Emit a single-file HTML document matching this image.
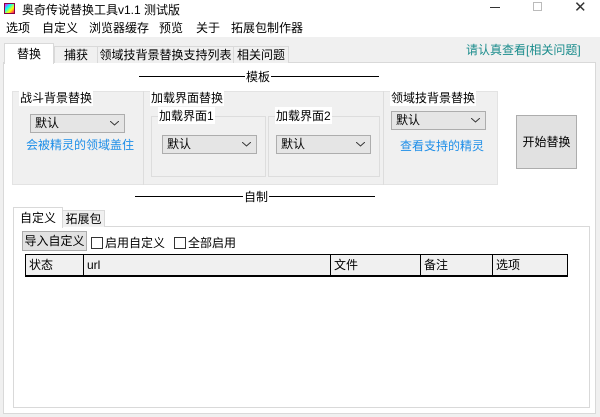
<!DOCTYPE html><html><head><meta charset="utf-8"><style>
*{margin:0;padding:0;box-sizing:border-box}
body{width:600px;height:417px;overflow:hidden;background:#f0f0f0;position:relative;font-family:"Liberation Sans","Noto Sans CJK SC",sans-serif;font-size:12px;color:#000}
.a{position:absolute;white-space:nowrap}
.combo{position:absolute;height:19px;background:#e5e5e5;border:1px solid #adadad;padding-left:4px;line-height:17px;font-size:12px}
.combo svg{position:absolute;right:5px;top:6px}
.tab{position:absolute;border:1px solid #d9d9d9;border-bottom:none;background:#f0f0f0;text-align:center;line-height:17px;font-size:12px}
.th{position:absolute;top:0;height:22px;border-right:1px solid #000;padding-left:3px;line-height:21px}
.chk{display:inline-block;width:12px;height:12px;border:1px solid #333;background:#fff;vertical-align:-2px;margin-right:2px}
</style></head><body>
<div class="a" style="left:0;top:0;width:600px;height:37px;background:#fff"></div>
<div class="a" style="left:4px;top:3px;width:11px;height:11px;background:linear-gradient(135deg,#f0f,#0ff,#ff0,#f06);border:1px solid #804"></div>
<div class="a" style="left:22px;top:1px;font-size:12px">奥奇传说替换工具v1.1 测试版</div>
<div class="a" style="left:490px;top:7px;width:10px;height:1px;background:#333"></div>
<div class="a" style="left:533px;top:2px;width:9px;height:9px;border:1px solid #bbb"></div>
<div class="a" style="left:574px;top:-2px;font-size:15px;color:#333">✕</div>
<div class="a" style="left:6px;top:19px">选项</div>
<div class="a" style="left:42px;top:19px">自定义</div>
<div class="a" style="left:89px;top:19px">浏览器缓存</div>
<div class="a" style="left:159px;top:19px">预览</div>
<div class="a" style="left:196px;top:19px">关于</div>
<div class="a" style="left:231px;top:19px">拓展包制作器</div>
<div class="a" style="left:3px;top:62px;width:593px;height:352px;background:#fff;border:1px solid #d9d9d9"></div>
<div class="tab" style="left:54px;top:46px;width:44px;height:17px">捕获</div>
<div class="tab" style="left:97px;top:46px;width:137px;height:17px">领域技背景替换支持列表</div>
<div class="tab" style="left:233px;top:46px;width:56px;height:17px">相关问题</div>
<div class="tab" style="left:4px;top:43px;width:50px;height:21px;background:#fff;line-height:20px">替换</div>
<div class="a" style="left:466px;top:41px;color:#1a8c8c;font-size:12px">请认真查看[相关问题]</div>
<div class="a" style="left:139px;top:76px;width:240px;height:1px;background:#000"></div>
<div class="a" style="left:245px;top:68px;background:#fff;padding:0 1px">模板</div>
<div class="a" style="left:12px;top:91px;width:486px;height:94px;background:#f0f0f0;border:1px solid #e3e3e3"></div>
<div class="a" style="left:143px;top:91px;width:1px;height:94px;background:#ddd"></div>
<div class="a" style="left:383px;top:91px;width:1px;height:94px;background:#ddd"></div>
<div class="a" style="left:19px;top:89px;background:#fff;padding:0 1px">战斗背景替换</div>
<div class="a" style="left:150px;top:89px;background:#fff;padding:0 1px">加载界面替换</div>
<div class="a" style="left:390px;top:89px;background:#fff;padding:0 1px">领域技背景替换</div>
<div class="combo" style="left:30px;top:114px;width:95px">默认<svg width="9" height="5"><path d="M0 0L4.5 4L9 0" stroke="#333" fill="none"/></svg></div>
<div class="a" style="left:26px;top:136px;color:#1e8ee8">会被精灵的领域盖住</div>
<div class="a" style="left:151px;top:116px;width:115px;height:61px;border:1px solid #ddd"></div>
<div class="a" style="left:268px;top:116px;width:112px;height:61px;border:1px solid #ddd"></div>
<div class="a" style="left:158px;top:107px;background:#fff;padding:0 1px">加载界面1</div>
<div class="a" style="left:275px;top:107px;background:#fff;padding:0 1px">加载界面2</div>
<div class="combo" style="left:162px;top:135px;width:95px">默认<svg width="9" height="5"><path d="M0 0L4.5 4L9 0" stroke="#333" fill="none"/></svg></div>
<div class="combo" style="left:276px;top:135px;width:95px">默认<svg width="9" height="5"><path d="M0 0L4.5 4L9 0" stroke="#333" fill="none"/></svg></div>
<div class="combo" style="left:391px;top:111px;width:95px">默认<svg width="9" height="5"><path d="M0 0L4.5 4L9 0" stroke="#333" fill="none"/></svg></div>
<div class="a" style="left:400px;top:137px;color:#1e8ee8">查看支持的精灵</div>
<div class="a" style="left:516px;top:115px;width:61px;height:54px;background:#e1e1e1;border:1px solid #adadad;text-align:center;line-height:52px">开始替换</div>
<div class="a" style="left:135px;top:196px;width:240px;height:1px;background:#000"></div>
<div class="a" style="left:243px;top:188px;background:#fff;padding:0 1px">自制</div>
<div class="a" style="left:13px;top:226px;width:577px;height:182px;background:#fff;border:1px solid #d9d9d9"></div>
<div class="tab" style="left:62px;top:210px;width:43px;height:17px">拓展包</div>
<div class="tab" style="left:13px;top:207px;width:50px;height:21px;background:#fff;line-height:20px">自定义</div>
<div class="a" style="left:22px;top:231px;width:65px;height:20px;background:#e1e1e1;border:1px solid #adadad;text-align:center;line-height:18px">导入自定义</div>
<div class="a" style="left:91px;top:234px"><span class="chk"></span>启用自定义</div>
<div class="a" style="left:174px;top:234px"><span class="chk"></span>全部启用</div>
<div class="a" style="left:25px;top:254px;width:543px;height:23px;background:#f0f0f0;border:1px solid #000;border-bottom:2px solid #000">
<div class="th" style="left:0;width:58px">状态</div>
<div class="th" style="left:58px;width:247px">url</div>
<div class="th" style="left:305px;width:90px">文件</div>
<div class="th" style="left:395px;width:72px">备注</div>
<div class="th" style="left:467px;width:74px;border-right:none">选项</div>
</div>
</body></html>
